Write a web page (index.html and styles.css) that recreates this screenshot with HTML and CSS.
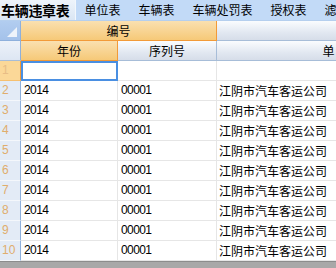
FILE: index.html
```html
<!DOCTYPE html>
<html>
<head>
<meta charset="utf-8">
<link rel="stylesheet" href="styles.css">
</head>
<body>
<div class="app">
  <div class="tabs">
    <div class="tab active">车辆违章表</div>
    <div class="tab">单位表</div>
    <div class="tab">车辆表</div>
    <div class="tab">车辆处罚表</div>
    <div class="tab">授权表</div>
    <div class="tab">滤</div>
  </div>
  <div class="grid">
    <div class="corner"><span class="tri"></span></div>
    <div class="hd hd-o span2">编号</div>
    <div class="hd hd-g"></div>

    <div class="rh rh-blank"></div>
    <div class="hd hd-o">年份</div>
    <div class="hd hd-g">序列号</div>
    <div class="hd hd-g">单</div>

    <div class="rh rh-sel">1</div>
    <div class="c sel"></div>
    <div class="c"></div>
    <div class="c"></div>

    <div class="rh">2</div><div class="c num">2014</div><div class="c num">00001</div><div class="c">江阴市汽车客运公司</div>
    <div class="rh">3</div><div class="c num">2014</div><div class="c num">00001</div><div class="c">江阴市汽车客运公司</div>
    <div class="rh">4</div><div class="c num">2014</div><div class="c num">00001</div><div class="c">江阴市汽车客运公司</div>
    <div class="rh">5</div><div class="c num">2014</div><div class="c num">00001</div><div class="c">江阴市汽车客运公司</div>
    <div class="rh">6</div><div class="c num">2014</div><div class="c num">00001</div><div class="c">江阴市汽车客运公司</div>
    <div class="rh">7</div><div class="c num">2014</div><div class="c num">00001</div><div class="c">江阴市汽车客运公司</div>
    <div class="rh">8</div><div class="c num">2014</div><div class="c num">00001</div><div class="c">江阴市汽车客运公司</div>
    <div class="rh">9</div><div class="c num">2014</div><div class="c num">00001</div><div class="c">江阴市汽车客运公司</div>
    <div class="rh">10</div><div class="c num">2014</div><div class="c num">00001</div><div class="c">江阴市汽车客运公司</div>
  </div>
  <div class="bottom"></div>
</div>
</body>
</html>
```

FILE: styles.css
```css
* { box-sizing: border-box; }
html, body { margin: 0; padding: 0; }
body {
  width: 336px;
  height: 268px;
  overflow: hidden;
  background: #ffffff;
  font-family: "Noto Sans CJK SC", "Liberation Sans", sans-serif;
  font-size: 12px;
  color: #000;
}
.app {
  width: 336px;
  height: 268px;
  display: flex;
  flex-direction: column;
  overflow: hidden;
}
.tabs {
  height: 21px;
  flex: 0 0 21px;
  display: flex;
  background: #c2daf7;
  border-bottom: 1px solid #b5cfee;
  white-space: nowrap;
}
.tab {
  padding: 0 9px;
  line-height: 20px;
  font-size: 12px;
  flex: 0 0 auto;
}
.tab.active {
  padding: 0 5px 0 1px;
  font-size: 14px;
  font-weight: bold;
  background: linear-gradient(#eef4fb, #dae6f4);
  border-right: 1px solid #f2f7fc;
  letter-spacing: -0.3px;
}
.grid {
  display: grid;
  grid-template-columns: 21px 97px 99px 224px;
  grid-auto-rows: 20px;
  width: 441px;
  flex: 0 0 auto;
}
.corner {
  background: linear-gradient(#b2cdf0, #a4c2ea);
  border-right: 1px solid #8eb0dc;
  border-bottom: 1px solid #8eb0dc;
  position: relative;
}
.tri {
  position: absolute;
  right: 3px;
  bottom: 3px;
  width: 0;
  height: 0;
  border-left: 10px solid transparent;
  border-bottom: 10px solid #eef3fa;
}
.hd {
  text-align: center;
  line-height: 19px;
  font-size: 12px;
  overflow: hidden;
  white-space: nowrap;
}
.hd-o {
  background: linear-gradient(#fae0b0, #f6c978);
  border-right: 1px solid #f29a38;
  border-bottom: 1px solid #f29a38;
}
.hd-g {
  background: linear-gradient(#fafcfe, #e2e8f1 60%, #d6dde9);
  border-right: 1px solid #a7bdd8;
  border-bottom: 1px solid #a7bdd8;
}
.span2 { grid-column: span 2; }
.rh {
  background: #e3ebf6;
  border-right: 1px solid #8eb0dc;
  border-bottom: 1px solid #f4f7fb;
  color: #e0ad6c;
  padding-left: 2px;
  line-height: 19px;
  font-family: "Liberation Sans", sans-serif;
  font-size: 12px;
}
.rh-blank {
  background: linear-gradient(#edf2f9, #dde6f3);
  border-bottom: 1px solid #a7bdd8;
}
.rh-sel {
  background: #fbd898;
  border-right: 1px solid #f29a38;
  border-bottom: 1px solid #f6c070;
  color: #e8bd86;
}
.c {
  border-right: 1px solid #e6e6e6;
  border-bottom: 1px solid #e6e6e6;
  padding-left: 2px;
  line-height: 19px;
  white-space: nowrap;
  overflow: hidden;
}
.num {
  font-family: "Liberation Sans", sans-serif;
  padding-left: 3px;
  letter-spacing: -0.6px;
}
.sel {
  border: 2px solid #4a8fe2;
}
.bottom {
  flex: 1 1 auto;
  background: #a8a8a8;
  border-top: 1px solid #8c8c8c;
}
```
